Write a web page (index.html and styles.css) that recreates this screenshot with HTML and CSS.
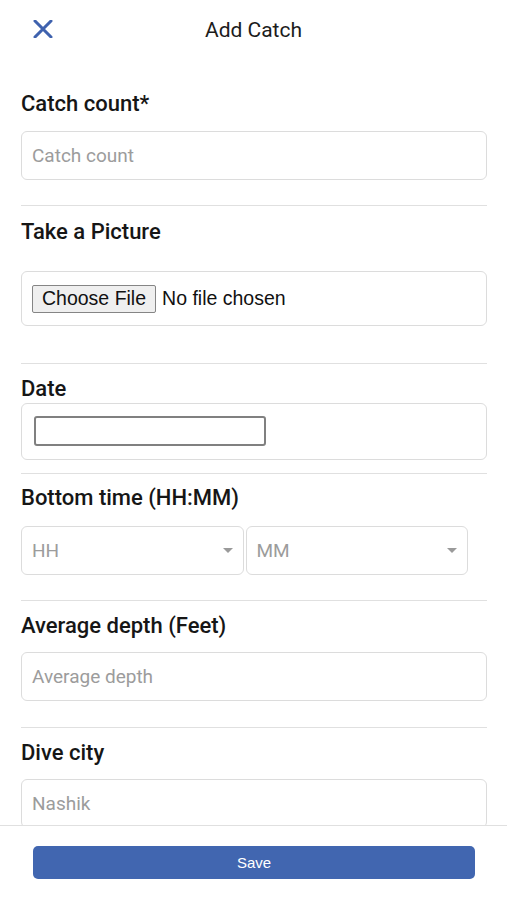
FILE: index.html
```html
<!DOCTYPE html>
<html lang="en">
<head>
<meta charset="utf-8">
<title>Add Catch</title>
<link rel="stylesheet" href="styles.css">
</head>
<body>
<header class="topbar">
  <button class="close" aria-label="Close">
    <svg width="20" height="18" viewBox="0 0 20 18"><path d="M2 1 L18 17 M18 1 L2 17" stroke="#3f62ae" stroke-width="3" stroke-linecap="round" fill="none"/></svg>
  </button>
  <h1 class="title">Add Catch</h1>
</header>

<main class="form">
  <section class="field field-first">
    <label class="label">Catch count*</label>
    <div class="box input-box"><span class="placeholder">Catch count</span></div>
  </section>

  <section class="field field-picture">
    <label class="label">Take a Picture</label>
    <div class="box file-box">
      <span class="file-btn">Choose File</span>
      <span class="file-text">No file chosen</span>
    </div>
  </section>

  <section class="field field-date">
    <label class="label">Date</label>
    <div class="box date-box"><span class="date-input"></span></div>
  </section>

  <section class="field field-time">
    <label class="label">Bottom time (HH:MM)</label>
    <div class="time-row">
      <div class="box select-box"><span class="placeholder">HH</span><span class="caret"></span></div>
      <div class="box select-box"><span class="placeholder">MM</span><span class="caret"></span></div>
    </div>
  </section>

  <section class="field field-depth">
    <label class="label">Average depth (Feet)</label>
    <div class="box input-box"><span class="placeholder">Average depth</span></div>
  </section>

  <section class="field field-last">
    <label class="label">Dive city</label>
    <div class="box input-box"><span class="placeholder">Nashik</span></div>
  </section>
</main>

<footer class="footer">
  <button class="save">Save</button>
</footer>
</body>
</html>
```
FILE: styles.css
```css
* { box-sizing: border-box; }
html, body { margin: 0; padding: 0; background: #fff; }
body {
  font-family: Roboto, "Noto Sans", Arial, sans-serif;
  color: #1c1c1c;
  width: 507px;
}
.topbar {
  height: 60px;
  display: flex;
  align-items: center;
  justify-content: center;
  position: relative;
}
.close {
  position: absolute;
  left: 33px;
  top: 20px;
  width: 20px;
  height: 18px;
  padding: 0;
  border: 0;
  background: none;
  display: flex;
}
.title {
  margin: 0;
  font-size: 21px;
  font-weight: 400;
  color: #1c1c1c;
  line-height: 24px;
}
.form {
  padding: 0 20px 80px 21px;
}
.field {
  padding: 13px 0 25px;
  border-bottom: 1px solid #e0e0e0;
  display: flex;
  flex-direction: column;
}
.field-first { padding-top: 32px; }
.label {
  font-size: 22px;
  font-weight: 500;
  line-height: 24px;
  margin-bottom: 14px;
  color: #161616;
}
.field-first .label { margin-bottom: 15px; }
.box {
  border: 1px solid #dcdcdc;
  border-radius: 6px;
  background: #fff;
}
.input-box {
  height: 49px;
  display: flex;
  align-items: center;
  padding-left: 10px;
}
.placeholder {
  font-size: 19px;
  color: #9c9c9c;
}
.field-picture { padding-top: 14px; padding-bottom: 37px; }
.field-picture .label { margin-bottom: 27px; }
.file-box {
  height: 55px;
  display: flex;
  align-items: center;
  padding-left: 10px;
  gap: 6px;
  font-family: "Liberation Sans", Arial, sans-serif;
}
.file-btn {
  height: 28px;
  padding: 0 9px;
  display: flex;
  align-items: center;
  font-size: 19.5px;
  background: #efefef;
  border: 1px solid #858585;
  border-radius: 2px;
  color: #111;
}
.file-text { font-size: 19.5px; color: #111; }
.field-date { padding-bottom: 13px; }
.field-date .label { margin-bottom: 2px; }
.date-box {
  height: 57px;
  padding: 12px 12px;
}
.date-input {
  display: block;
  width: 232px;
  height: 30px;
  border: 2px solid #808080;
  border-radius: 3px;
}
.field-time { padding-top: 12px; padding-bottom: 25px; }
.field-time .label { margin-bottom: 16px; }
.time-row {
  display: flex;
  gap: 2px;
  width: 447px;
}
.select-box {
  flex: 1;
  height: 49px;
  display: flex;
  align-items: center;
  justify-content: space-between;
  padding: 0 10px 0 10px;
}
.caret {
  width: 0;
  height: 0;
  border-left: 5px solid transparent;
  border-right: 5px solid transparent;
  border-top: 5px solid #9a9a9a;
}
.field-depth { padding-bottom: 26px; }
.field-last { border-bottom: 0; }
.footer {
  position: fixed;
  left: 0;
  right: 0;
  bottom: 0;
  height: 75px;
  background: #fff;
  border-top: 1px solid #e0e0e0;
  padding: 20px 32px 0 33px;
}
.save {
  display: block;
  width: 442px;
  height: 33px;
  border: 0;
  border-radius: 5px;
  background: #4166b0;
  color: #fff;
  font-family: "Liberation Sans", Arial, sans-serif;
  font-size: 15px;
  padding: 0;
}
```
